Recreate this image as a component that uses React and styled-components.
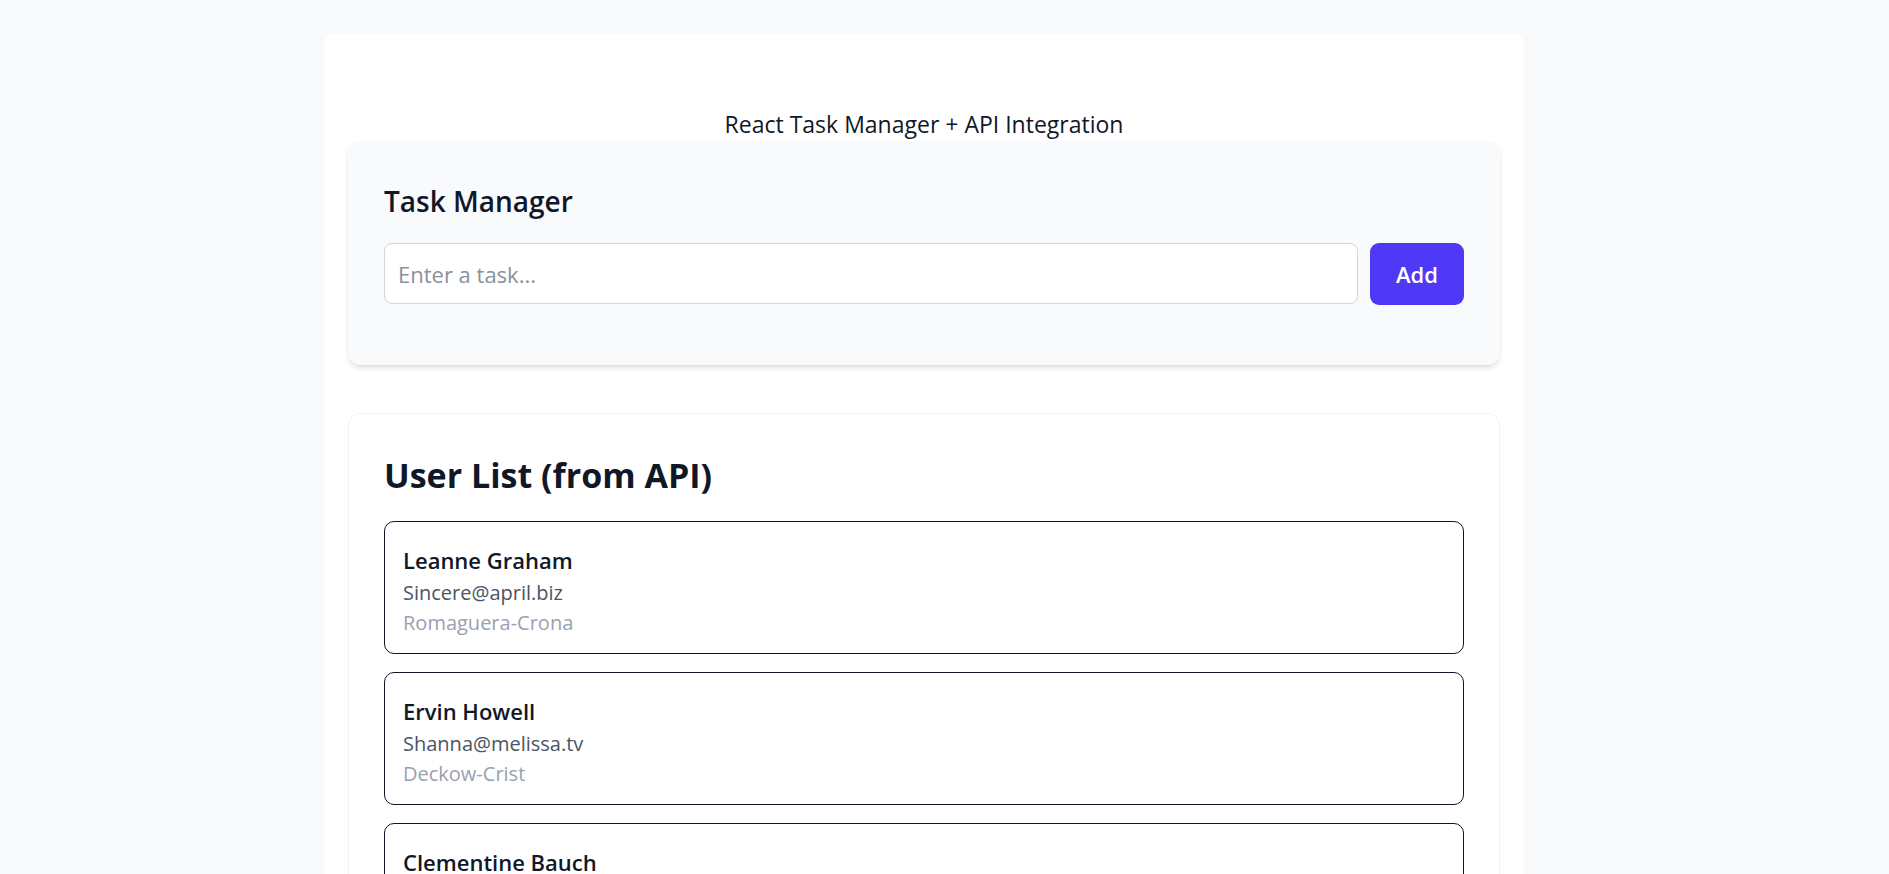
import React, { useState } from "react";
import styled, { createGlobalStyle } from "styled-components";

const GlobalStyle = createGlobalStyle`
  html, body {
    margin: 0;
    padding: 0;
    background: #f9fafb;
  }
  body {
    font-family: "Open Sans", "Noto Sans", Arial, sans-serif;
    color: #101828;
  }
  * {
    box-sizing: border-box;
  }
`;

const users = [
  { id: 1, name: "Leanne Graham", email: "Sincere@april.biz", company: "Romaguera-Crona" },
  { id: 2, name: "Ervin Howell", email: "Shanna@melissa.tv", company: "Deckow-Crist" },
  { id: 3, name: "Clementine Bauch", email: "Nathan@yesenia.net", company: "Romaguera-Jacobson" },
  { id: 4, name: "Patricia Lebsack", email: "Julianne.OConner@kory.org", company: "Robel-Corkery" },
  { id: 5, name: "Chelsey Dietrich", email: "Lucio_Hettinger@annie.ca", company: "Keebler LLC" },
];

function App() {
  const [task, setTask] = useState("");
  const [tasks, setTasks] = useState([]);

  const handleAdd = () => {
    if (!task.trim()) return;
    setTasks([...tasks, task]);
    setTask("");
  };

  return (
    <>
      <GlobalStyle />
      <Container>
        <Title>React Task Manager + API Integration</Title>
        <TaskCard>
          <TaskHeading>Task Manager</TaskHeading>
          <Form>
            <TaskInput
              placeholder="Enter a task..."
              value={task}
              onChange={e => setTask(e.target.value)}
            />
            <AddButton onClick={handleAdd}>Add</AddButton>
          </Form>
          {tasks.length > 0 && (
            <TaskList>
              {tasks.map((t, i) => (
                <li key={i}>{t}</li>
              ))}
            </TaskList>
          )}
        </TaskCard>
        <UserCard>
          <UserHeading>User List (from API)</UserHeading>
          <UserList>
            {users.map(u => (
              <UserItem key={u.id}>
                <UserName>{u.name}</UserName>
                <UserEmail>{u.email}</UserEmail>
                <UserCompany>{u.company}</UserCompany>
              </UserItem>
            ))}
          </UserList>
        </UserCard>
      </Container>
    </>
  );
}

export default App;

const Container = styled.div`
  width: 1200px;
  margin: 33px 0 40px 324px;
  padding: 24px;
  background: #fff;
  border-radius: 12px;
`;

const Title = styled.div`
  text-align: center;
  font-size: 23px;
  line-height: 30px;
  padding-top: 52px;
  margin-bottom: 2px;
`;

const TaskCard = styled.section`
  background: #f9fafb;
  border-radius: 12px;
  padding: 40px 36px 60px;
  box-shadow: 0 4px 6px -1px rgba(0, 0, 0, 0.1), 0 2px 4px -2px rgba(0, 0, 0, 0.1);
  margin-bottom: 48px;
`;

const TaskHeading = styled.h2`
  margin: 0 0 22px;
  font-size: 28px;
  line-height: 40px;
  font-weight: 600;
`;

const Form = styled.div`
  display: flex;
  gap: 12px;
`;

const TaskInput = styled.input`
  flex: 1;
  height: 61px;
  padding: 0 13px;
  border: 1px solid #d1d5dc;
  border-radius: 8px;
  background: #fff;
  font-family: inherit;
  font-size: 22px;
  color: #101828;
  outline: none;
  &::placeholder {
    color: #8a919e;
  }
`;

const AddButton = styled.button`
  width: 94px;
  height: 62px;
  border: none;
  border-radius: 9px;
  background: #4f39f6;
  color: #fff;
  font-family: inherit;
  font-size: 22px;
  font-weight: 600;
  cursor: pointer;
`;

const TaskList = styled.ul`
  margin: 20px 0 0;
  padding-left: 24px;
  font-size: 20px;
`;

const UserCard = styled.section`
  background: #fff;
  border: 1px solid #f0f1f3;
  border-radius: 12px;
  padding: 35px 35px;
`;

const UserHeading = styled.h2`
  margin: 0 0 20px;
  font-size: 34px;
  line-height: 52px;
  font-weight: 700;
`;

const UserList = styled.div`
  display: flex;
  flex-direction: column;
  gap: 18px;
`;

const UserItem = styled.div`
  border: 1px solid #101828;
  border-radius: 10px;
  padding: 22px 18px 15px;
`;

const UserName = styled.div`
  font-size: 22px;
  line-height: 32px;
  font-weight: 600;
  margin-bottom: 2px;
`;

const UserEmail = styled.div`
  font-size: 20px;
  line-height: 30px;
  color: #4a5565;
`;

const UserCompany = styled.div`
  font-size: 20px;
  line-height: 30px;
  color: #99a1af;
`;
